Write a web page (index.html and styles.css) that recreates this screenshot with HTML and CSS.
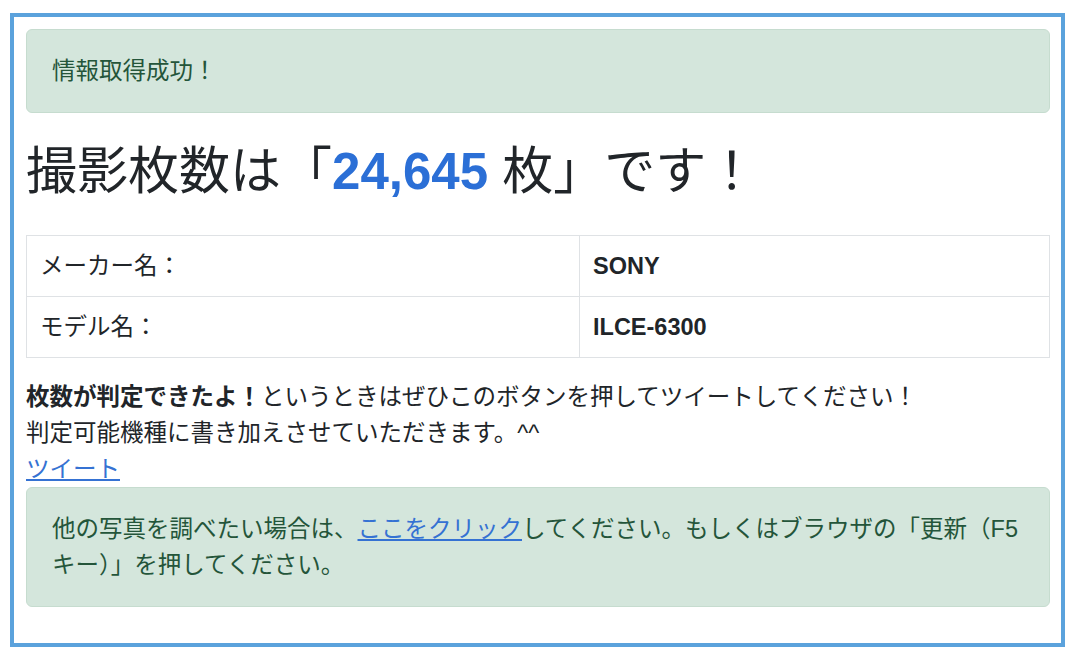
FILE: index.html
```html
<!DOCTYPE html>
<html lang="ja">
<head>
    <meta charset="UTF-8">
    <title>撮影枚数チェッカー</title>
    <link rel="stylesheet" href="styles.css">
</head>
<body>
    <div class="frame">
        <div class="alert">情報取得成功！</div>

        <h1 class="result">撮影枚数は「<span class="count">24,645</span> 枚」です！</h1>

        <table class="info">
            <tr>
                <td class="label">メーカー名：</td>
                <td class="value">SONY</td>
            </tr>
            <tr>
                <td class="label">モデル名：</td>
                <td class="value">ILCE-6300</td>
            </tr>
        </table>

        <p class="note">
            <strong>枚数が判定できたよ！</strong>というときはぜひこのボタンを押してツイートしてください！<br>
            判定可能機種に書き加えさせていただきます。^^<br>
            <a href="#">ツイート</a>
        </p>

        <div class="alert alert-bottom">他の写真を調べたい場合は、<a href="#">ここをクリック</a>してください。もしくはブラウザの「更新（F5キー）」を押してください。</div>
    </div>
</body>
</html>
```

FILE: styles.css
```css
body {
    margin: 0;
    padding: 13px 15px 0 10px;
    background: #fff;
    color: #212529;
    font-family: "Liberation Sans", "Noto Sans CJK JP", sans-serif;
    font-size: 23.5px;
    line-height: 36px;
}

.frame {
    border: 4px solid #5ba2dc;
    padding: 12px 11px 12px 12px;
}

.alert {
    background: #d4e6dc;
    border: 1px solid #c6dccf;
    border-radius: 6px;
    color: #24553a;
    padding: 23px 25px;
    margin-bottom: 24px;
}

.alert a {
    color: #3572d3;
    text-decoration: underline;
}

.result {
    margin: 0 0 28px;
    font-size: 51px;
    font-weight: normal;
    line-height: 70px;
}

.count {
    color: #2b6fd6;
    font-weight: bold;
}

.info {
    width: 100%;
    border-collapse: collapse;
    margin-bottom: 21px;
}

.info td {
    border: 1px solid #dfe2e5;
    padding: 12px 13px;
}

.label {
    width: 526px;
}

.value {
    font-weight: bold;
}

.note {
    margin: 0;
}

.note a {
    color: #3572d3;
    text-decoration: underline;
}
```
